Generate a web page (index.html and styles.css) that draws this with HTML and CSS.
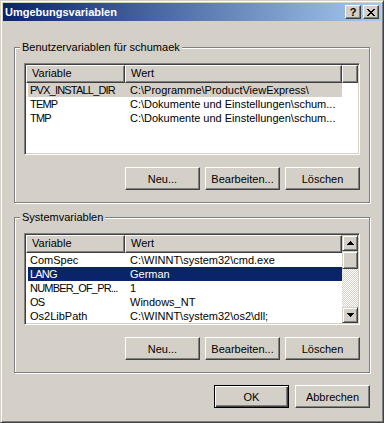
FILE: index.html
```html
<!DOCTYPE html>
<html lang="de">

<head>
    <meta charset="UTF-8">
    <title>Umgebungsvariablen</title>
    <link rel="stylesheet" href="styles.css">
</head>

<body>
    <div class="window">
        <div class="titlebar">
            <span class="title">Umgebungsvariablen</span>
            <div class="caption-buttons">
                <button class="cap-btn help">?</button>
                <button class="cap-btn close">
                    <svg width="8" height="7" viewBox="0 0 8 7" shape-rendering="crispEdges">
                        <path d="M0 0h2v1H0zM6 0h2v1H6zM1 1h2v1H1zM5 1h2v1H5zM2 2h4v1H2zM3 3h2v1H3zM2 4h4v1H2zM1 5h2v1H1zM5 5h2v1H5zM0 6h2v1H0zM6 6h2v1H6z" fill="#000"/>
                    </svg>
                </button>
            </div>
        </div>

        <div class="dialog-body">
            <fieldset class="group">
                <legend>Benutzervariablen für schumaek</legend>
                <div class="listview">
                    <div class="lv-main">
                        <div class="lv-header">
                            <div class="lv-col">Variable</div>
                            <div class="lv-col">Wert</div>
                            <div class="lv-col"></div>
                        </div>
                        <div class="lv-row inactive-sel"><span class="caps">PVX_INSTALL_DIR</span><span class="val">C:\Programme\ProductViewExpress\</span></div>
                        <div class="lv-row"><span class="caps">TEMP</span><span class="val">C:\Dokumente und Einstellungen\schum...</span></div>
                        <div class="lv-row"><span class="caps">TMP</span><span class="val">C:\Dokumente und Einstellungen\schum...</span></div>
                    </div>
                </div>
                <div class="button-row">
                    <button class="btn">Neu...</button>
                    <button class="btn">Bearbeiten...</button>
                    <button class="btn">Löschen</button>
                </div>
            </fieldset>

            <fieldset class="group second">
                <legend>Systemvariablen</legend>
                <div class="listview">
                    <div class="lv-main">
                        <div class="lv-header">
                            <div class="lv-col">Variable</div>
                            <div class="lv-col">Wert</div>
                        </div>
                        <div class="lv-row"><span>ComSpec</span><span class="val">C:\WINNT\system32\cmd.exe</span></div>
                        <div class="lv-row selected"><span class="caps">LANG</span><span class="val">German</span></div>
                        <div class="lv-row"><span class="caps">NUMBER_OF_PR...</span><span class="val">1</span></div>
                        <div class="lv-row"><span class="caps">OS</span><span class="val">Windows_NT</span></div>
                        <div class="lv-row"><span>Os2LibPath</span><span class="val">C:\WINNT\system32\os2\dll;</span></div>
                    </div>
                    <div class="scrollbar">
                        <div class="sb-btn">
                            <svg width="7" height="4" viewBox="0 0 7 4" shape-rendering="crispEdges"><path d="M3 0h1v1h1v1h1v1h1v1H0V3h1V2h1V1h1z" fill="#000"/></svg>
                        </div>
                        <div class="sb-thumb"></div>
                        <div class="sb-track"></div>
                        <div class="sb-btn">
                            <svg width="7" height="4" viewBox="0 0 7 4" shape-rendering="crispEdges"><path d="M0 0h7v1H6v1H5v1H4v1H3V3H2V2H1V1H0z" fill="#000"/></svg>
                        </div>
                    </div>
                </div>
                <div class="button-row">
                    <button class="btn">Neu...</button>
                    <button class="btn">Bearbeiten...</button>
                    <button class="btn">Löschen</button>
                </div>
            </fieldset>

            <div class="dialog-buttons">
                <button class="btn default">OK</button>
                <button class="btn">Abbrechen</button>
            </div>
        </div>
    </div>
</body>

</html>
```

FILE: styles.css
```css
* {
    box-sizing: border-box;
}

body {
    margin: 0;
    background-color: #d4d0c8;
    font-family: "Liberation Sans", Arial, sans-serif;
    font-size: 11px;
    color: #000;
}

.window {
    width: 384px;
    height: 423px;
    background-color: #d4d0c8;
    border: 1px solid;
    border-color: #d4d0c8 #404040 #404040 #d4d0c8;
    box-shadow: inset 1px 1px #fff, inset -1px -1px #808080;
    padding: 2px;
}

.titlebar {
    height: 18px;
    display: flex;
    align-items: center;
    justify-content: space-between;
    padding: 0 2px 0 2px;
    background: linear-gradient(to right, #0a246a, #a6caf0);
}

.title {
    color: #fff;
    font-weight: bold;
}

.caption-buttons {
    display: flex;
    gap: 2px;
}

.cap-btn {
    width: 16px;
    height: 14px;
    padding: 0;
    background-color: #d4d0c8;
    border: 1px solid;
    border-color: #fff #404040 #404040 #fff;
    box-shadow: inset -1px -1px #808080;
    display: flex;
    align-items: center;
    justify-content: center;
    font-family: "Liberation Sans", Arial, sans-serif;
    font-size: 11px;
    font-weight: bold;
    line-height: 12px;
}

.dialog-body {
    padding: 20px 11px 0;
}

.group {
    margin: 0;
    padding: 9px 9px 12px;
    min-width: 0;
    border: 1px solid #808080;
    box-shadow: 1px 1px #fff, inset 1px 1px #fff;
}

.group legend {
    padding: 0 2px;
    margin-left: -4px;
    line-height: 13px;
    background-color: #d4d0c8;
}

.group.second {
    margin-top: 8px;
}

.listview {
    height: 92px;
    display: flex;
    padding: 1px;
    background-color: #fff;
    border: 1px solid;
    border-color: #808080 #fff #fff #808080;
    box-shadow: inset 1px 1px #404040, inset -1px -1px #d4d0c8;
}

.lv-main {
    flex: 1;
    min-width: 0;
    overflow: hidden;
}

.lv-header {
    display: grid;
    grid-template-columns: 99px 217px 1fr;
    height: 18px;
}

.lv-col {
    background-color: #d4d0c8;
    border: 1px solid;
    border-color: #fff #404040 #404040 #fff;
    box-shadow: inset -1px -1px #808080;
    padding: 0 5px;
    line-height: 15px;
    white-space: nowrap;
    overflow: hidden;
}

.lv-row {
    display: grid;
    grid-template-columns: 97px 217px;
    width: 314px;
    height: 14px;
    margin-left: 2px;
    line-height: 14px;
}

.lv-row span {
    padding-left: 2px;
    white-space: nowrap;
    overflow: hidden;
}

.lv-row .caps {
    letter-spacing: -0.8px;
}

.lv-row .val {
    padding-left: 5px;
}

.lv-row.inactive-sel {
    background-color: #d4d0c8;
}

.lv-row.selected {
    background-color: #0a246a;
    color: #fff;
}

.scrollbar {
    width: 16px;
    display: flex;
    flex-direction: column;
}

.sb-btn,
.sb-thumb {
    background-color: #d4d0c8;
    border: 1px solid;
    border-color: #d4d0c8 #404040 #404040 #d4d0c8;
    box-shadow: inset 1px 1px #fff, inset -1px -1px #808080;
}

.sb-btn {
    height: 16px;
    display: flex;
    align-items: center;
    justify-content: center;
}

.sb-thumb {
    height: 18px;
}

.sb-track {
    flex: 1;
    background: repeating-conic-gradient(#fff 0 25%, #d4d0c8 0 50%) 0 0 / 2px 2px;
}

.button-row {
    display: flex;
    justify-content: flex-end;
    gap: 5px;
    margin-top: 12px;
}

.btn {
    width: 75px;
    height: 23px;
    padding: 0;
    background-color: #d4d0c8;
    border: 1px solid;
    border-color: #fff #404040 #404040 #fff;
    box-shadow: inset -1px -1px #808080;
    font-family: "Liberation Sans", Arial, sans-serif;
    font-size: 11px;
    color: #000;
}

.btn.default {
    border-color: #000;
    box-shadow: inset 1px 1px #fff, inset -1px -1px #404040, inset -2px -2px #808080;
}

.dialog-buttons {
    display: flex;
    justify-content: flex-end;
    gap: 6px;
    margin-top: 12px;
}
```
